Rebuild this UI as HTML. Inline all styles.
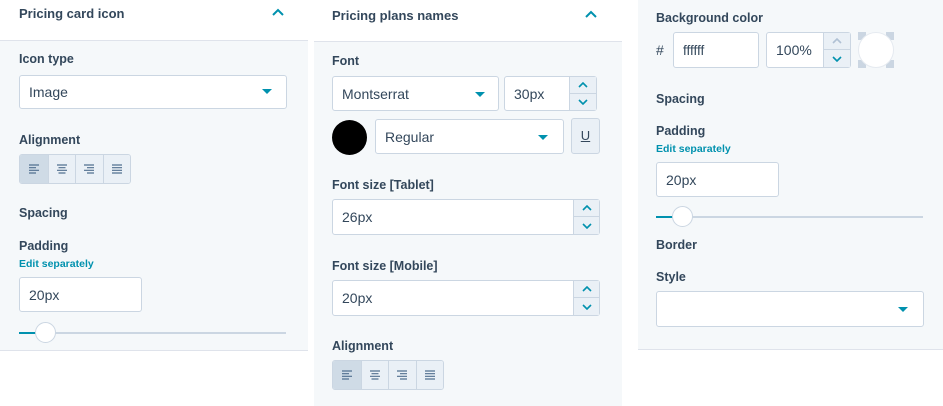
<!DOCTYPE html><html><head><style>
*{margin:0;padding:0;box-sizing:border-box}
body{width:943px;height:406px;background:#fff;position:relative;overflow:hidden;font-family:"Liberation Sans",sans-serif;color:#33475b}
.a{position:absolute}
.bg{position:absolute;background:#f5f8fa}
.h{position:absolute;font-size:13px;font-weight:bold;color:#33475b}
.l{position:absolute;font-size:12.5px;font-weight:bold;color:#33475b}
.e{position:absolute;font-size:10.5px;font-weight:bold;color:#0091ae}
.in{position:absolute;background:#fff;border:1px solid #cbd6e2;border-radius:3px;font-size:14px;padding-left:9px;display:flex;align-items:center}
.car{position:absolute;width:0;height:0;border-left:5px solid transparent;border-right:5px solid transparent;border-top:5px solid #0091ae}
.sp{position:absolute;background:#eaf0f6;border-left:1px solid #cbd6e2}
.sp div{height:50%;display:flex;align-items:center;justify-content:center}
.sp div:first-child{border-bottom:1px solid #cbd6e2}
.al{position:absolute;display:flex;border:1px solid #cbd6e2;border-radius:3px;overflow:hidden}
.al span{width:27.5px;height:28px;background:#eaf0f6;border-left:1px solid #cbd6e2;display:flex;align-items:center;justify-content:center}
.al span:first-child{border-left:none;background:#cfdbe6}
</style></head><body>
<svg width="0" height="0" style="position:absolute">
<defs>
<symbol id="up" viewBox="0 0 10 6"><path d="M1 5L5 1L9 5" stroke="#0091ae" stroke-width="1.6" fill="none"/></symbol>
<symbol id="dn" viewBox="0 0 10 6"><path d="M1 1L5 5L9 1" stroke="#0091ae" stroke-width="1.6" fill="none"/></symbol>
<symbol id="upg" viewBox="0 0 10 6"><path d="M1 5L5 1L9 5" stroke="#b0c1d4" stroke-width="1.6" fill="none"/></symbol>
<symbol id="aL" viewBox="0 0 12 10"><path d="M1 1H11M1 3.7H8M1 6.3H11M1 9H8" stroke="#516f90" stroke-width="1.2"/></symbol>
<symbol id="aC" viewBox="0 0 12 10"><path d="M1 1H11M2.5 3.7H9.5M1 6.3H11M2.5 9H9.5" stroke="#516f90" stroke-width="1.2"/></symbol>
<symbol id="aR" viewBox="0 0 12 10"><path d="M1 1H11M4 3.7H11M1 6.3H11M4 9H11" stroke="#516f90" stroke-width="1.2"/></symbol>
<symbol id="aJ" viewBox="0 0 12 10"><path d="M1 1H11M1 3.7H11M1 6.3H11M1 9H11" stroke="#516f90" stroke-width="1.2"/></symbol>
</defs></svg>
<!-- left -->
<div class="bg" style="left:0;top:40px;width:308px;height:311px;border-top:1px solid #dfe3eb;border-bottom:1px solid #dfe3eb"></div>
<div class="h" style="left:19px;top:6px">Pricing card icon</div>
<svg class="a" style="left:272px;top:8px" width="12" height="8"><path d="M1 7L6 2L11 7" stroke="#0091ae" stroke-width="2" fill="none"/></svg>
<div class="l" style="left:19px;top:52px">Icon type</div>
<div class="in" style="left:19px;top:75px;width:268px;height:34px">Image</div><div class="car" style="left:262px;top:89px"></div>
<div class="l" style="left:19px;top:133px">Alignment</div>
<div class="al" style="left:19px;top:154px"><span><svg width="12" height="10"><use href="#aL"/></svg></span><span><svg width="12" height="10"><use href="#aC"/></svg></span><span><svg width="12" height="10"><use href="#aR"/></svg></span><span><svg width="12" height="10"><use href="#aJ"/></svg></span></div>
<div class="l" style="left:19px;top:206px">Spacing</div>
<div class="l" style="left:19px;top:239px">Padding</div>
<div class="e" style="left:19px;top:258px">Edit separately</div>
<div class="in" style="left:19px;top:277px;width:123px;height:35px">20px</div>
<div class="a" style="left:19px;top:332px;width:267px;height:2px;background:#cbd6e2"></div>
<div class="a" style="left:19px;top:332px;width:26px;height:2px;background:#0091ae"></div>
<div class="a" style="left:35px;top:322px;width:21px;height:21px;border-radius:50%;background:#fff;border:1px solid #cbd6e2"></div>
<!-- middle -->
<div class="bg" style="left:314px;top:41px;width:308px;height:365px;border-top:1px solid #dfe3eb"></div>
<div class="h" style="left:332px;top:8px">Pricing plans names</div>
<svg class="a" style="left:585px;top:10px" width="12" height="8"><path d="M1 7L6 2L11 7" stroke="#0091ae" stroke-width="2" fill="none"/></svg>
<div class="l" style="left:332px;top:54px">Font</div>
<div class="in" style="left:332px;top:76px;width:167px;height:35px">Montserrat</div><div class="car" style="left:475px;top:92px"></div>
<div class="in" style="left:504px;top:76px;width:93px;height:35px">30px</div><div class="sp" style="left:569px;top:77px;width:27px;height:33px"><div><svg width="10" height="6"><use href="#up"/></svg></div><div><svg width="10" height="6"><use href="#dn"/></svg></div></div>
<div class="a" style="left:332px;top:120px;width:35px;height:35px;border-radius:50%;background:#000"></div>
<div class="in" style="left:375px;top:119px;width:189px;height:35px">Regular</div><div class="car" style="left:538px;top:135px"></div>
<div class="a" style="left:571px;top:118px;width:29px;height:36px;background:#eaf0f6;border:1px solid #cbd6e2;border-radius:3px;font-size:13px;text-align:center;line-height:34px;text-decoration:underline">U</div>
<div class="l" style="left:332px;top:178px">Font size [Tablet]</div>
<div class="in" style="left:332px;top:199px;width:268px;height:36px">26px</div><div class="sp" style="left:573px;top:200px;width:26px;height:34px"><div><svg width="10" height="6"><use href="#up"/></svg></div><div><svg width="10" height="6"><use href="#dn"/></svg></div></div>
<div class="l" style="left:332px;top:259px">Font size [Mobile]</div>
<div class="in" style="left:332px;top:280px;width:268px;height:36px">20px</div><div class="sp" style="left:573px;top:281px;width:26px;height:34px"><div><svg width="10" height="6"><use href="#up"/></svg></div><div><svg width="10" height="6"><use href="#dn"/></svg></div></div>
<div class="l" style="left:332px;top:339px">Alignment</div>
<div class="al" style="left:332px;top:360px"><span><svg width="12" height="10"><use href="#aL"/></svg></span><span><svg width="12" height="10"><use href="#aC"/></svg></span><span><svg width="12" height="10"><use href="#aR"/></svg></span><span><svg width="12" height="10"><use href="#aJ"/></svg></span></div>
<!-- right -->
<div class="bg" style="left:638px;top:0;width:305px;height:350px;border-bottom:1px solid #dfe3eb"></div>
<div class="l" style="left:656px;top:11px">Background color</div>
<div class="a" style="left:656px;top:42px;font-size:14px">#</div>
<div class="in" style="left:673px;top:32px;width:86px;height:36px;font-size:13.5px">ffffff</div>
<div class="in" style="left:766px;top:32px;width:85px;height:36px">100%</div><div class="sp" style="left:823px;top:33px;width:27px;height:34px"><div><svg width="10" height="6"><use href="#upg"/></svg></div><div><svg width="10" height="6"><use href="#dn"/></svg></div></div>
<div class="a" style="left:858px;top:32px;width:8px;height:8px;background:#cbd6e2"></div>
<div class="a" style="left:886px;top:32px;width:8px;height:8px;background:#cbd6e2"></div>
<div class="a" style="left:858px;top:60px;width:8px;height:8px;background:#cbd6e2"></div>
<div class="a" style="left:886px;top:60px;width:8px;height:8px;background:#cbd6e2"></div>
<div class="a" style="left:858px;top:32px;width:36px;height:36px;background:#fff;border-radius:50%;border:1px solid #e5eaf0"></div>
<div class="l" style="left:656px;top:92px">Spacing</div>
<div class="l" style="left:656px;top:124px">Padding</div>
<div class="e" style="left:656px;top:143px">Edit separately</div>
<div class="in" style="left:656px;top:162px;width:123px;height:35px">20px</div>
<div class="a" style="left:656px;top:216px;width:267px;height:2px;background:#cbd6e2"></div>
<div class="a" style="left:656px;top:216px;width:26px;height:2px;background:#0091ae"></div>
<div class="a" style="left:672px;top:206px;width:21px;height:21px;border-radius:50%;background:#fff;border:1px solid #cbd6e2"></div>
<div class="l" style="left:656px;top:238px">Border</div>
<div class="l" style="left:656px;top:270px">Style</div>
<div class="in" style="left:656px;top:291px;width:268px;height:36px"></div><div class="car" style="left:898px;top:307px"></div>
</body></html>
